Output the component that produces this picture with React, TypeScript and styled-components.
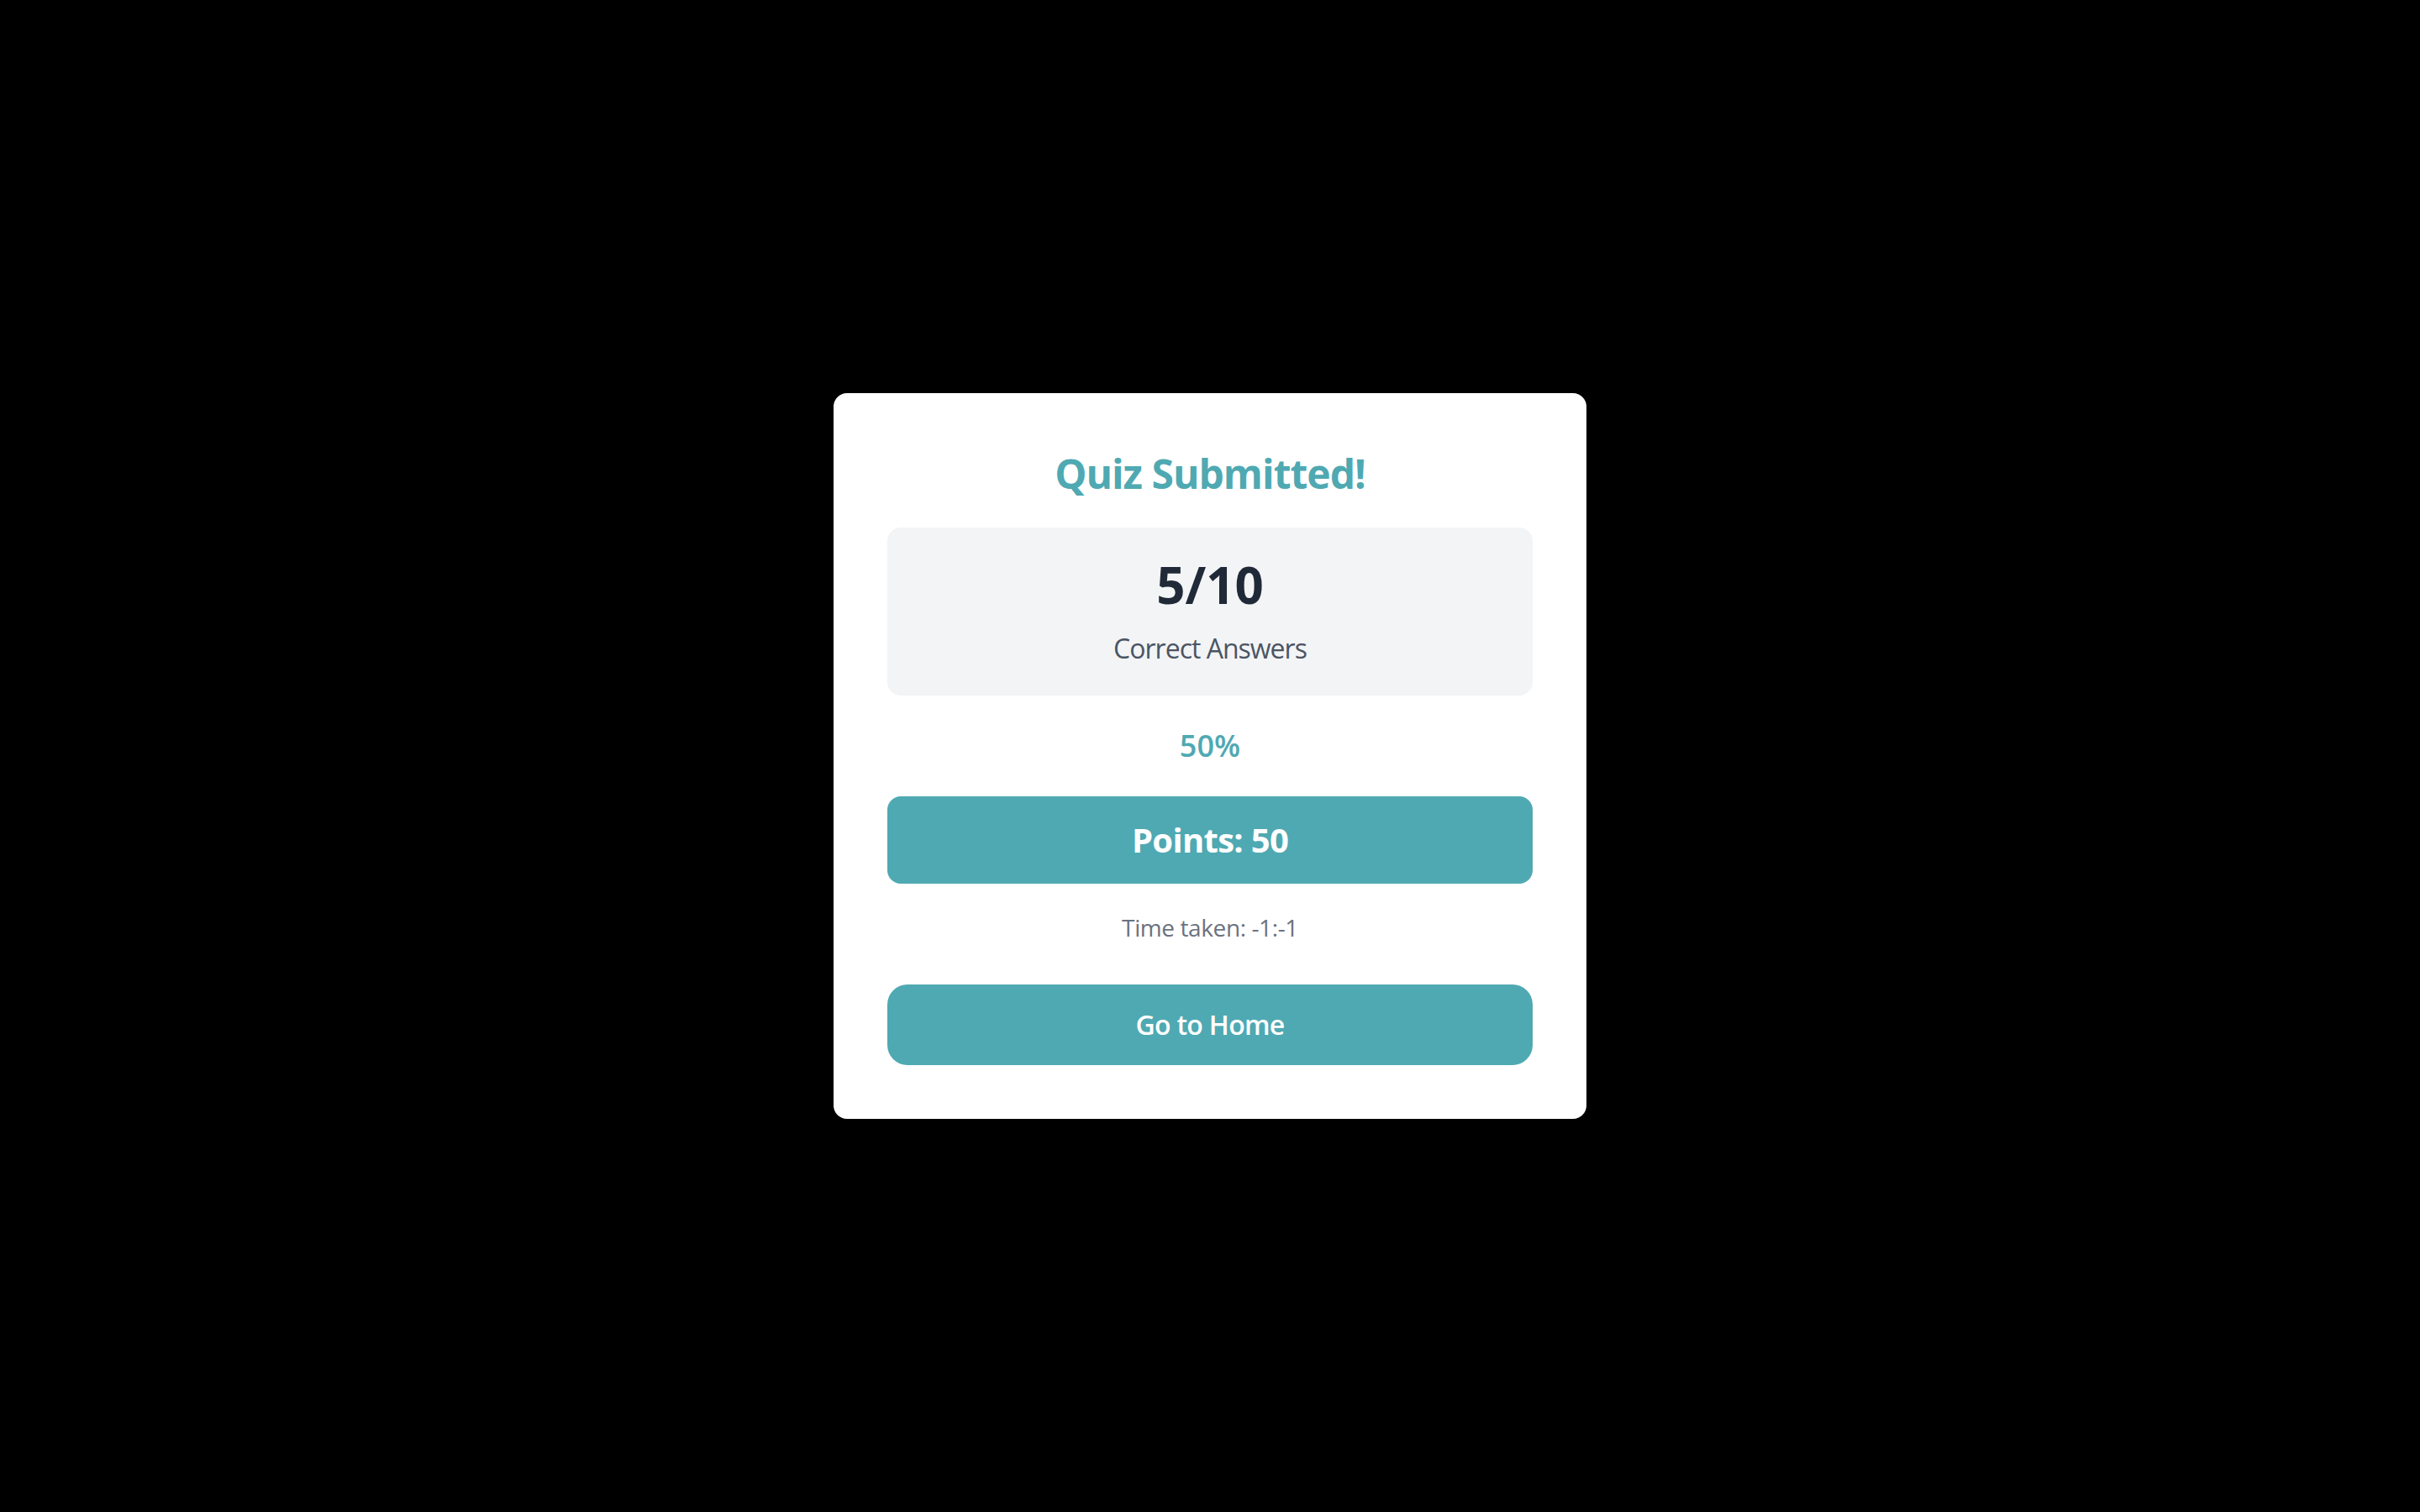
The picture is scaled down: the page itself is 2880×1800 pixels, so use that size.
import React, { FC } from "react";
import styled, { createGlobalStyle } from "styled-components";

const GlobalStyle = createGlobalStyle`
  html, body {
    margin: 0;
    padding: 0;
    background: #000000;
  }
  * {
    box-sizing: border-box;
  }
`;

const teal = "#4FA9B2";

const Screen = styled.div`
  min-height: 100vh;
  display: flex;
  align-items: center;
  justify-content: center;
  font-family: "Open Sans", "Noto Sans", sans-serif;
`;

const Card = styled.div`
  width: 896px;
  background: #ffffff;
  border-radius: 16px;
  padding: 64px;
  display: flex;
  flex-direction: column;
  text-align: center;
`;

const Title = styled.h2`
  margin: 0 0 32px;
  font-size: 48px;
  line-height: 64px;
  font-weight: 700;
  letter-spacing: -1px;
  color: ${teal};
`;

const ScoreBox = styled.div`
  background: #f3f4f6;
  border-radius: 16px;
  padding: 32px;
  display: flex;
  flex-direction: column;
`;

const Score = styled.div`
  font-size: 60px;
  line-height: 72px;
  font-weight: 700;
  color: #1f2937;
`;

const ScoreLabel = styled.div`
  margin-top: 16px;
  font-size: 32px;
  line-height: 48px;
  letter-spacing: -1px;
  color: #4b5563;
`;

const Percent = styled.div`
  margin-top: 32px;
  font-size: 36px;
  line-height: 56px;
  font-weight: 600;
  color: ${teal};
`;

const PointsBar = styled.div`
  margin-top: 32px;
  background: ${teal};
  color: #ffffff;
  border-radius: 16px;
  padding: 24px;
  font-size: 40px;
  line-height: 56px;
  font-weight: 700;
  letter-spacing: -0.7px;
`;

const TimeTaken = styled.div`
  margin-top: 32px;
  font-size: 28px;
  line-height: 40px;
  letter-spacing: -0.4px;
  color: #6b7280;
`;

const HomeButton = styled.button<{ $radius?: number }>`
  margin-top: 48px;
  width: 100%;
  border: none;
  background: ${teal};
  color: #ffffff;
  border-radius: ${(p) => p.$radius ?? 24}px;
  padding: 24px;
  font-family: inherit;
  font-size: 32px;
  line-height: 48px;
  font-weight: 600;
  letter-spacing: -0.7px;
  cursor: pointer;
`;

const App: FC = () => {
  const correct = 5;
  const total = 10;
  const percent = Math.round((correct / total) * 100);
  return (
    <>
      <GlobalStyle />
      <Screen>
        <Card>
          <Title>Quiz Submitted!</Title>
          <ScoreBox>
            <Score>
              {correct}/{total}
            </Score>
            <ScoreLabel>Correct Answers</ScoreLabel>
          </ScoreBox>
          <Percent>{percent}%</Percent>
          <PointsBar>Points: {correct * 10}</PointsBar>
          <TimeTaken>Time taken: -1:-1</TimeTaken>
          <HomeButton>Go to Home</HomeButton>
        </Card>
      </Screen>
    </>
  );
};

export default App;
